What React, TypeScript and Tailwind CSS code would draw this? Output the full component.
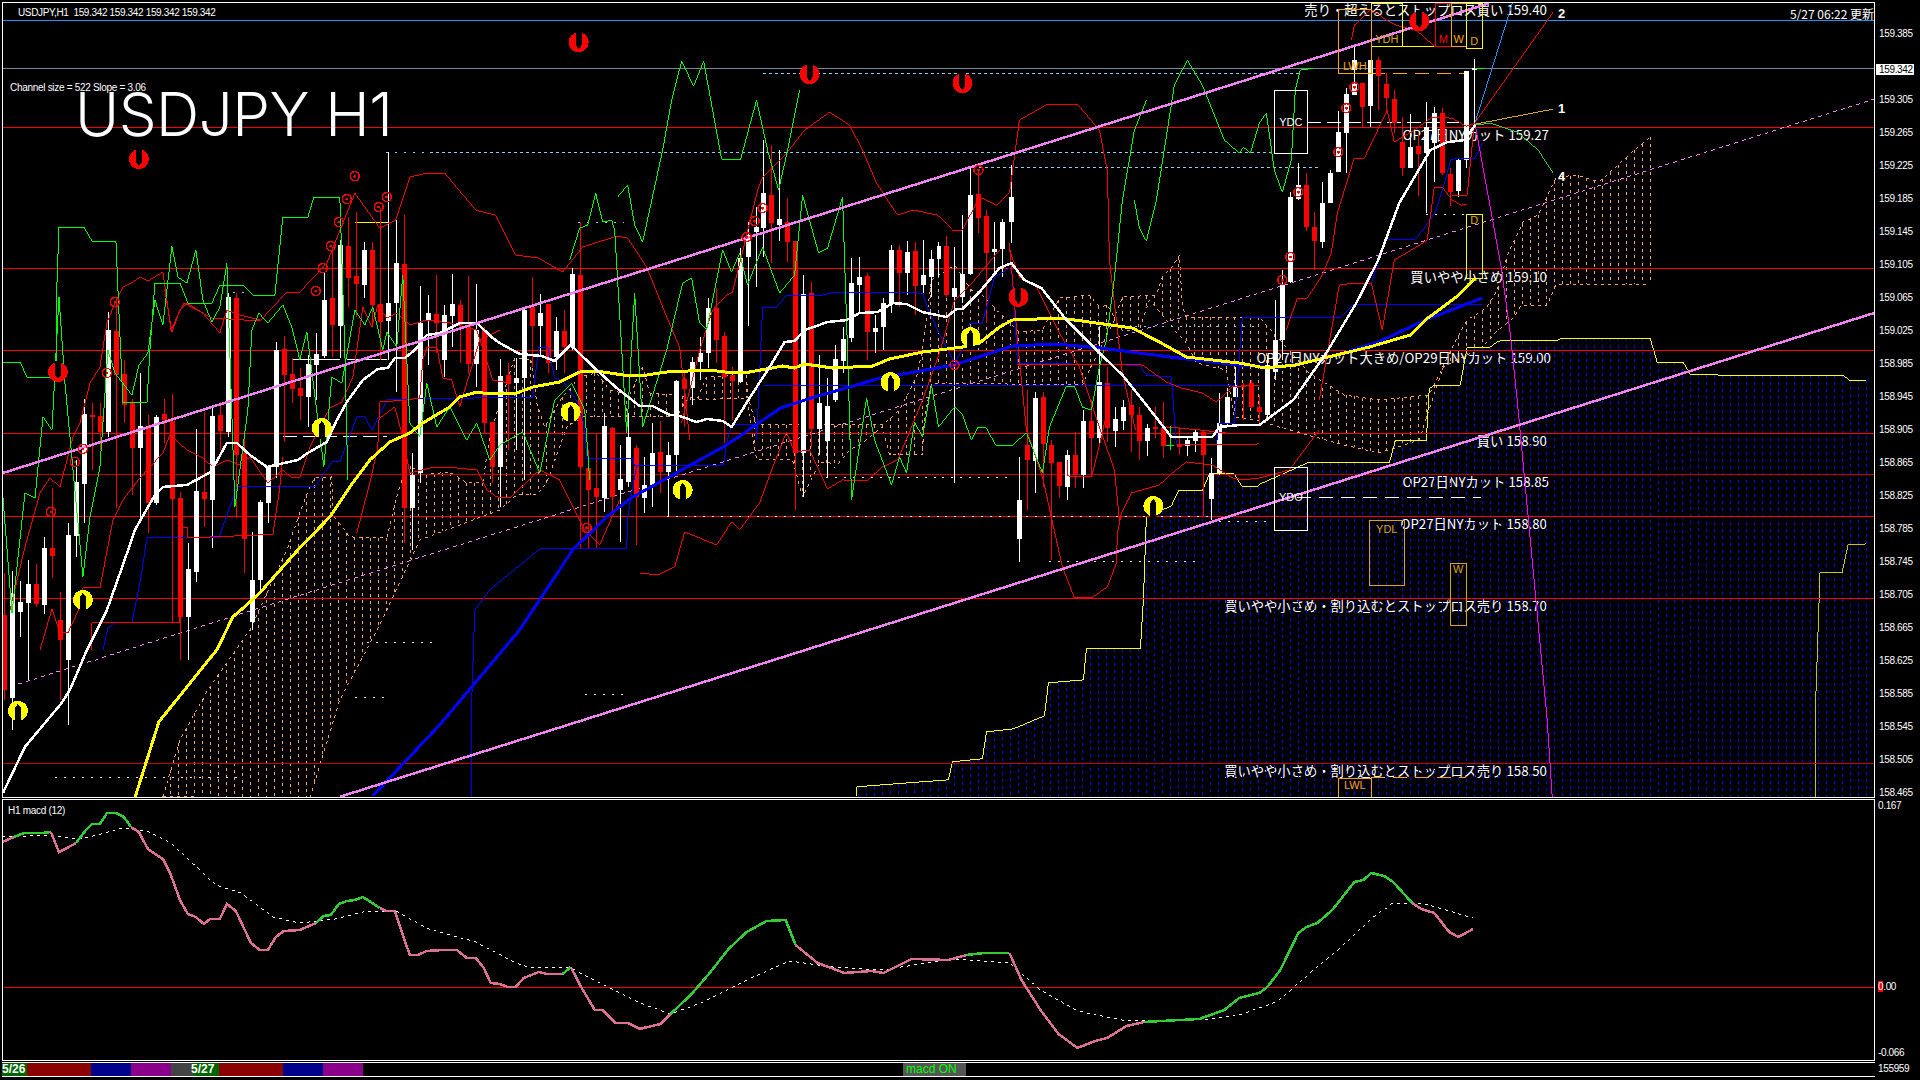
import React from 'react';

type Pt = [number, number];
type Candle = [number, 'w' | 'r', number, number, number, number];

// x, colour, high, body top, body bottom, low (page pixels)
const candles: Candle[] = [
  [4,'r',573,615,690,700],[12,'w',571,593,698,730],[20,'w',581,602,612,637],[28,'w',560,584,603,680],[36,'r',564,584,604,607],
  [44,'w',537,548,605,614],[52,'r',488,548,556,578],[60,'r',592,620,640,700],[68,'w',523,535,660,725],[76,'w',460,482,536,557],
  [84,'w',399,414,484,523],[92,'r',403,415,417,470],[100,'r',403,416,432,450],[108,'w',312,330,432,437],[116,'r',300,331,375,508],
  [124,'r',360,374,405,423],[132,'r',399,403,448,495],[140,'w',373,426,448,520],[148,'r',415,428,503,533],[156,'w',415,417,503,505],
  [164,'r',399,414,420,443],[172,'r',394,421,499,623],[180,'r',492,498,617,660],[188,'w',543,569,617,660],[196,'w',429,491,572,582],
  [204,'r',412,492,499,527],[212,'w',407,416,500,548],[220,'r',402,415,431,450],[228,'w',293,297,432,437],[236,'r',293,298,455,518],
  [244,'r',437,453,539,573],[252,'w',532,580,622,630],[260,'w',500,502,580,590],[268,'w',467,467,503,523],[276,'w',342,350,467,478],
  [284,'r',336,349,375,442],[292,'r',358,374,389,403],[300,'r',368,388,396,420],[308,'w',355,364,397,427],[316,'w',333,354,365,400],
  [324,'w',273,300,356,358],[332,'r',247,298,325,357],[340,'w',240,245,326,358],[348,'r',217,246,278,307],[356,'r',212,276,284,317],
  [364,'w',242,250,285,298],[372,'r',242,250,305,327],[380,'r',208,304,322,360],[388,'w',152,303,321,360],[396,'w',220,263,303,392],
  [404,'r',215,264,508,543],[412,'w',453,475,508,550],[420,'w',286,323,473,483],[428,'w',295,313,321,365],[436,'r',275,314,323,353],
  [444,'w',305,315,360,377],[452,'w',274,304,316,347],[460,'r',300,305,325,363],[468,'r',276,325,364,373],[476,'w',284,330,364,387],
  [484,'r',327,330,423,433],[492,'r',422,422,467,483],[500,'w',359,376,467,507],[508,'r',363,375,384,450],[516,'w',358,378,383,450],
  [524,'w',309,310,378,480],[532,'r',277,307,326,367],[540,'w',294,313,326,357],[548,'r',305,304,363,373],[556,'w',317,331,357,370],
  [564,'r',310,331,347,373],[572,'w',268,274,347,350],[580,'r',222,275,467,548],[588,'r',450,468,490,548],[596,'r',433,488,497,548],
  [604,'w',413,426,498,512],[612,'r',427,428,497,513],[620,'w',445,479,490,542],[628,'w',413,437,482,487],[636,'r',445,448,497,545],
  [644,'w',457,485,498,513],[652,'w',423,453,485,507],[660,'r',421,452,472,493],[668,'w',442,455,472,517],[676,'w',380,381,455,473],
  [684,'r',370,379,389,427],[692,'w',357,362,388,405],[700,'w',337,353,362,380],[708,'w',298,308,353,368],[716,'r',288,308,340,363],
  [724,'r',332,336,377,443],[732,'r',367,375,381,420],[740,'w',248,258,382,383],[748,'w',222,235,257,326],[756,'w',207,227,232,287],
  [763,'w',140,193,228,257],[771,'r',145,195,223,263],[779,'w',150,219,225,241],[787,'r',198,222,242,262],[795,'r',241,241,453,510],
  [803,'w',275,294,453,497],[811,'r',282,293,429,447],[819,'w',355,403,429,455],[827,'w',378,406,441,478],[835,'w',345,359,400,402],
  [843,'w',327,339,361,373],[851,'w',258,283,338,342],[859,'w',257,277,285,313],[867,'r',273,276,332,360],[875,'w',315,328,332,353],
  [883,'w',298,303,327,350],[891,'w',245,250,304,313],[899,'r',245,250,273,307],[907,'w',241,252,273,295],[915,'r',242,251,286,315],
  [923,'w',240,275,285,293],[931,'w',250,259,277,297],[939,'w',242,246,259,277],[947,'r',236,246,295,297],[955,'w',247,288,297,483],
  [963,'w',215,274,297,303],[971,'w',168,195,274,275],[979,'r',170,194,218,233],[987,'r',210,216,253,323],[995,'w',222,249,252,273],
  [1003,'w',219,222,249,277],[1012,'w',165,197,222,243],[1020,'w',457,500,539,562],[1028,'r',390,445,460,510],[1036,'w',392,398,461,493],
  [1044,'r',392,397,444,487],[1052,'r',440,445,463,560],[1060,'r',462,462,486,498],[1068,'w',450,455,487,500],[1076,'r',432,455,475,488],
  [1084,'w',410,421,475,488],[1092,'r',400,421,438,477],[1100,'w',327,382,438,443],[1108,'r',367,383,428,442],[1116,'w',407,419,431,447],
  [1124,'w',400,407,421,430],[1132,'r',390,405,415,452],[1140,'r',407,415,441,460],[1148,'w',424,428,441,456],[1156,'r',407,427,429,438],
  [1164,'r',402,428,446,458],[1180,'r',427,445,446,455],[1188,'w',437,440,446,456],[1196,'w',430,432,441,452],[1204,'r',430,432,455,517],
  [1212,'w',458,473,499,520],[1220,'w',393,423,473,475],[1228,'w',388,397,423,425],[1236,'w',367,385,397,397],[1244,'r',383,385,387,420],
  [1252,'r',380,383,407,408],[1260,'r',395,407,412,425],[1268,'w',355,365,415,420],[1276,'w',300,340,372,380],[1283,'w',270,285,340,360],
  [1291,'w',192,197,282,283],[1299,'w',163,185,199,200],[1307,'r',173,185,227,231],[1315,'r',212,227,241,270],[1323,'w',182,203,242,248],
  [1331,'w',170,173,203,203],[1339,'w',111,132,172,172],[1347,'w',88,94,133,173],[1355,'w',47,83,95,95],[1363,'r',83,83,107,127],
  [1371,'w',60,60,106,127],[1379,'r',57,60,76,110],[1387,'r',73,84,98,112],[1395,'r',90,99,123,133],[1403,'r',117,142,168,176],
  [1411,'w',114,147,168,168],[1419,'r',133,146,154,196],[1427,'w',102,127,153,213],[1435,'w',107,113,143,182],[1443,'r',108,113,173,175],
  [1451,'r',168,174,192,206],[1459,'w',158,160,191,197],[1467,'w',71,71,160,168],[1475,'w',59,68,70,125],
];

const whiteMa: Pt[] = [[3,793],[25,747],[61,704],[70,690],[87,650],[107,610],[123,565],[135,530],[155,495],[163,487],[187,485],[211,472],[227,443],[237,443],[250,455],[267,467],[298,460],[308,453],[327,442],[337,420],[347,402],[363,380],[378,369],[388,368],[395,358],[405,358],[415,350],[427,335],[440,333],[460,323],[477,323],[493,338],[500,343],[520,354],[542,356],[555,361],[571,345],[597,370],[617,388],[640,406],[653,406],[670,415],[677,415],[697,422],[707,419],[723,421],[732,427],[750,398],[770,367],[785,342],[795,341],[805,330],[828,322],[847,320],[860,313],[878,312],[893,303],[907,304],[923,312],[947,317],[957,309],[963,309],[980,292],[1000,268],[1012,263],[1025,280],[1042,288],[1067,320],[1100,353],[1123,375],[1147,405],[1172,437],[1213,437],[1220,427],[1240,425],[1260,425],[1294,400],[1327,353],[1357,303],[1379,260],[1400,203],[1431,150],[1448,142],[1465,140],[1476,125]];
const yellowMa: Pt[] = [[135,798],[159,722],[208,661],[217,650],[233,617],[247,605],[260,593],[298,550],[330,517],[350,487],[370,460],[390,442],[410,433],[423,423],[450,407],[460,397],[477,392],[483,393],[517,393],[533,387],[560,382],[580,372],[597,371],[630,376],[647,375],[667,372],[710,370],[733,373],[750,372],[783,366],[795,368],[805,364],[833,368],[873,366],[890,359],[923,352],[963,347],[980,343],[1000,327],[1013,320],[1060,318],[1090,322],[1133,328],[1160,342],[1187,357],[1240,363],[1266,368],[1296,365],[1370,347],[1411,335],[1426,320],[1457,297],[1476,278]];
const blueMa: Pt[] = [[373,796],[440,725],[520,630],[573,550],[607,517],[633,497],[673,475],[727,445],[781,408],[815,397],[881,378],[954,365],[1013,346],[1056,344],[1101,348],[1171,357],[1240,365],[1277,368],[1327,358],[1379,342],[1426,320],[1483,298]];

const thinBlue: Pt[][] = [
  [[103,650],[108,628],[115,623],[132,623],[140,583],[147,538],[219,538],[237,487],[315,487],[332,462],[340,462],[357,417],[365,417],[372,430],[387,400],[413,399],[533,397],[539,347],[548,347],[555,378],[563,380],[578,403],[585,427],[587,459],[633,459],[635,466],[724,465],[727,443],[732,425],[757,425],[757,440],[763,307],[777,307],[787,295],[823,295],[835,292],[923,293],[930,313],[943,340],[955,363],[963,350],[970,323],[983,323],[995,277],[1012,267],[1015,310],[1018,363],[1127,365],[1140,365],[1147,375],[1172,377],[1177,445],[1217,445],[1220,424],[1235,423],[1243,317],[1342,317],[1355,304],[1483,304]],
  [[472,798],[472,700],[475,610],[490,590],[540,549],[627,549],[628,517],[637,465]],
  [[763,385],[1236,385]],
  [[1372,283],[1387,239],[1416,239],[1426,227],[1437,210],[1448,173],[1452,159],[1476,158],[1483,143]],
];

const thinRed: Pt[][] = [
  [[10,610],[25,547],[40,493],[50,478],[60,487],[73,437],[80,423],[90,383],[100,367],[107,323],[115,303],[123,287],[133,282],[140,277],[148,281],[163,272],[167,300],[171,330],[184,303],[212,318],[245,320],[261,320],[286,293],[300,292],[327,263],[355,193],[380,228],[396,220],[410,177],[427,173],[445,173],[476,210],[496,215],[516,255],[539,258],[563,272],[583,247],[617,236],[628,238],[647,267],[667,317],[680,347],[686,400],[690,440]],
  [[682,423],[700,350],[713,310],[727,295],[733,292],[758,190],[763,177],[787,153],[805,130],[830,112],[850,125],[863,150],[877,183],[898,215],[913,210],[937,215],[953,230],[963,230],[980,197],[997,205],[1010,193],[1020,120],[1048,104],[1078,104],[1100,130],[1108,171],[1110,260],[1123,373],[1136,430]],
  [[40,650],[52,609],[60,633],[68,633],[80,607],[83,588],[100,588],[113,520],[123,500],[140,478],[163,453],[170,435],[187,450],[203,458],[213,467],[227,460],[240,465],[250,457],[268,483],[283,470],[292,478],[300,478],[310,447],[330,408],[342,402],[353,377],[363,307],[372,327],[378,305],[387,318],[397,313],[410,325],[427,320],[450,323],[477,330],[493,380],[510,383]],
  [[165,290],[172,332],[180,310],[187,303],[203,313],[220,333],[227,310],[240,315],[260,320]],
  [[92,650],[92,623],[180,623],[180,528],[188,528],[188,538],[260,535],[273,535],[280,487],[283,457]],
  [[357,533],[370,483],[378,447],[380,402],[407,400],[420,398],[423,360],[427,347],[437,347],[443,378],[452,380],[460,407],[467,383],[480,340],[500,330]],
  [[380,418],[395,407],[403,437],[410,473],[430,468],[457,468],[477,470],[487,490],[497,497],[510,498],[540,470],[560,480],[585,530],[600,545],[620,500]],
  [[640,573],[658,575],[675,567],[685,532],[717,545],[732,522],[740,530],[760,503],[772,470],[787,432],[795,452],[810,450],[828,489],[843,480],[867,481],[883,467],[898,460],[908,437],[923,400],[940,353],[955,300],[975,280],[1000,250]],
  [[1010,243],[1018,340],[1027,430],[1043,477],[1063,567],[1075,598],[1092,598],[1108,587],[1117,563],[1118,533],[1122,513],[1132,493],[1160,485],[1173,473],[1187,462],[1213,465],[1233,478],[1245,480],[1260,478],[1290,470],[1320,430]],
  [[1010,250],[1020,277],[1037,287],[1060,333],[1080,367],[1100,427],[1115,470],[1120,520]],
  [[1018,364],[1143,365],[1167,382],[1182,388],[1203,393],[1217,402],[1233,387],[1260,385]],
  [[1068,460],[1068,476],[1092,477],[1103,433],[1110,400]],
  [[1167,427],[1200,430],[1227,433]],[[1178,445],[1260,444]],
  [[1287,330],[1298,298],[1308,298],[1322,277],[1332,253],[1338,213],[1355,158],[1365,158],[1388,110],[1395,142],[1415,130],[1433,117],[1453,118],[1467,126],[1477,123]],
  [[1320,400],[1340,285],[1355,283],[1372,283],[1383,330],[1395,260],[1417,247],[1428,240],[1435,187],[1443,187],[1453,200],[1462,205],[1468,204]],
  [[1352,40],[1355,25],[1372,9],[1387,20],[1397,25],[1417,30],[1435,46],[1450,46]],
  [[1476,122],[1554,12]],
  [[1453,195],[1468,195],[1475,125]],
];

const thinGreen: Pt[][] = [
  [[3,362],[20,362],[27,377],[57,377],[57,283],[59,227],[84,227],[92,241],[116,241],[118,290],[123,403],[147,403],[150,350],[155,283],[180,283],[188,303],[212,303],[220,285],[243,285],[253,295],[275,295],[283,217],[308,217],[314,197],[340,197],[345,350],[348,480]],
  [[3,498],[12,613],[25,493],[35,498],[43,417],[52,430],[59,297],[65,383],[83,577],[90,517],[100,467],[108,350],[115,373],[132,395],[139,365],[148,353],[155,300],[163,325],[172,246],[178,277],[187,283],[196,250],[203,300],[212,322],[220,307],[227,263],[235,507],[248,410],[252,330],[259,313],[268,323],[283,305],[292,327],[300,360],[307,332],[324,467],[332,377],[342,383],[355,310],[365,325],[373,307],[383,350],[387,332],[397,347],[403,275],[410,423],[420,437],[427,383],[437,427],[450,407],[467,440],[477,423],[490,460],[500,445],[523,432],[540,473],[555,400],[572,383],[585,410],[590,480]],
  [[570,260],[580,228],[588,225],[596,193],[603,222],[612,220],[615,230],[627,433],[635,293],[643,427],[667,350],[683,283],[692,278],[700,323],[707,330],[723,250],[732,272],[740,253],[748,285],[763,247],[780,293],[795,275],[803,195],[819,253],[828,248],[843,197],[849,383],[852,500],[867,398],[875,440],[892,485],[900,457],[907,473],[915,422],[923,437],[932,385],[939,427],[955,407],[963,415],[972,440],[978,428],[987,428],[996,445],[1012,446],[1027,433],[1043,473],[1050,427],[1067,386],[1075,386],[1083,407],[1092,410],[1100,367],[1107,340],[1115,278],[1123,200],[1135,130],[1147,100]],
  [[618,197],[628,185],[635,225],[643,242],[663,150],[672,100],[682,61],[694,86],[704,61],[722,159],[741,159],[757,100],[768,150],[779,190],[788,150],[800,90]],
  [[1135,200],[1140,228],[1147,241],[1157,200],[1175,85],[1188,60],[1203,85],[1225,140],[1240,153],[1244,147],[1251,153],[1260,123],[1267,113],[1275,170],[1283,192],[1292,160],[1296,90],[1301,70],[1314,68]],
  [[1171,426],[1171,450]],[[1167,446],[1175,446]],[[1476,68],[1486,68]],
];

const yellowStep: Pt[] = [[857,796],[857,787],[949,780],[953,762],[983,759],[987,732],[1014,729],[1045,716],[1049,683],[1084,680],[1087,649],[1141,649],[1144,600],[1147,517],[1172,506],[1179,491],[1203,491],[1210,474],[1235,474],[1243,487],[1258,487],[1261,484],[1308,463],[1390,463],[1396,441],[1427,441],[1430,389],[1435,385],[1461,385],[1468,347],[1491,347],[1499,341],[1559,340],[1562,338],[1651,338],[1658,362],[1684,362],[1691,374],[1719,375],[1844,375],[1850,380],[1867,380]];

const cloudTop: Pt[] = [[163,797],[180,740],[208,690],[250,630],[287,550],[300,513],[310,487],[315,478],[332,477],[333,515],[350,537],[387,538],[397,497],[407,463],[423,475],[450,472],[467,483],[483,483],[490,437],[498,410],[515,358],[532,360],[537,403],[545,427],[562,398],[580,377],[597,373],[610,390],[630,395],[643,367],[650,393],[673,395],[698,398],[707,377],[747,375],[748,397],[757,425],[883,425],[900,410],[917,377],[923,350],[932,280],[955,265],[963,277],[972,290],[980,292],[997,310],[1020,332],[1043,330],[1060,298],[1090,295],[1100,307],[1108,305],[1115,317],[1123,297],[1157,295],[1163,277],[1172,268],[1180,255],[1183,307],[1187,317],[1260,317],[1310,373],[1345,395],[1380,400],[1430,395],[1455,343],[1468,320],[1487,308],[1498,290],[1509,253],[1524,222],[1539,215],[1557,177],[1578,175],[1600,182],[1613,170],[1632,153],[1651,137]];
const cloudBottom: Pt[] = [[163,797],[310,798],[340,700],[380,625],[420,540],[500,510],[517,495],[537,495],[547,483],[567,427],[583,417],[677,417],[687,400],[747,398],[757,460],[793,460],[803,497],[820,463],[830,463],[835,468],[850,450],[863,443],[883,427],[890,455],[923,455],[925,417],[932,383],[1083,385],[1090,370],[1115,320],[1123,330],[1140,330],[1150,300],[1187,343],[1197,363],[1227,370],[1235,417],[1257,420],[1290,430],[1345,445],[1380,453],[1420,440],[1444,367],[1483,347],[1496,333],[1515,317],[1522,305],[1548,305],[1557,284],[1651,284]];

const macdLines: { color: string; pts: Pt[] }[] = [
  { color: '#db7093', pts: [[2,842],[14,837]] },
  { color: '#32cd32', pts: [[14,837],[24,833],[41,833],[51,832]] },
  { color: '#db7093', pts: [[51,832],[59,852],[67,848],[76,843]] },
  { color: '#32cd32', pts: [[76,843],[86,830],[92,824],[100,824],[107,813],[116,813],[124,817],[131,827]] },
  { color: '#db7093', pts: [[131,827],[139,832],[148,849],[163,859],[171,875],[180,900],[188,914],[196,917],[204,924],[210,919],[220,919],[227,904],[236,911],[251,943],[260,950],[268,950],[276,937],[284,931],[300,930],[316,923]] },
  { color: '#32cd32', pts: [[316,923],[324,916],[331,915],[339,904],[347,901],[355,900],[363,897],[371,902],[380,908]] },
  { color: '#db7093', pts: [[380,908],[386,911],[395,911],[404,938],[410,955],[418,955],[427,951],[443,950],[457,950],[467,958],[476,958],[484,968],[491,983],[500,984],[508,987],[516,987],[524,978],[539,972],[547,974],[563,974]] },
  { color: '#32cd32', pts: [[563,974],[571,967]] },
  { color: '#db7093', pts: [[571,967],[582,988],[588,998],[595,1010],[603,1010],[616,1023],[628,1023],[640,1029],[661,1024],[671,1014]] },
  { color: '#32cd32', pts: [[671,1014],[692,994],[710,973],[729,949],[747,932],[767,921],[786,920],[796,945]] },
  { color: '#db7093', pts: [[796,945],[818,963],[845,973],[872,971],[884,973],[912,959],[949,960],[967,955]] },
  { color: '#32cd32', pts: [[967,955],[985,953],[1010,953]] },
  { color: '#db7093', pts: [[1010,953],[1022,980],[1041,1010],[1059,1034],[1078,1048],[1096,1041],[1108,1038],[1127,1026],[1145,1022]] },
  { color: '#32cd32', pts: [[1145,1022],[1200,1019],[1225,1010],[1240,998],[1260,993],[1268,987],[1281,970],[1299,933],[1307,927],[1318,923],[1333,910],[1355,882],[1364,880],[1372,873],[1385,876],[1394,882],[1403,892],[1413,903]] },
  { color: '#db7093', pts: [[1413,903],[1422,909],[1435,913],[1450,932],[1459,937],[1474,929]] },
];
const macdSignal: Pt[] = [[2,837],[51,835],[78,839],[98,835],[122,828],[147,831],[171,843],[200,870],[216,885],[241,893],[273,917],[300,923],[335,919],[367,911],[396,911],[429,929],[476,942],[516,963],[531,968],[571,968],[604,985],[640,1003],[671,1014],[704,1002],[747,980],[790,961],[833,967],[882,970],[955,959],[1010,963],[1041,990],[1078,1011],[1127,1021],[1212,1019],[1240,1015],[1277,1002],[1288,993],[1312,972],[1342,947],[1374,917],[1392,904],[1422,903],[1450,911],[1474,918]];

const circles: Pt[] = [[51,512],[75,462],[83,449],[107,373],[115,302],[316,291],[323,268],[331,246],[339,222],[347,199],[355,176],[379,207],[387,197],[587,528],[747,237],[755,221],[763,208],[955,365],[979,170],[1283,280],[1291,257],[1299,192],[1339,152],[1347,108],[1355,87]];
const downArrows: Pt[] = [[579,42],[139,159],[58,372],[810,74],[963,83],[1019,297],[1420,21]];
const upArrows: Pt[] = [[18,711],[83,600],[322,428],[571,412],[683,490],[891,382],[971,337],[1154,506]];

const segments: [string, string, string][] = [
  ['#87cefa', '2 7', 'M386 152H430M578 222H624M233 292H248M1100 326H1260'],
  ['#87cefa', '3 3', 'M430 152H1273M980 167H1322M763 73H1300'],
  ['#ffe4e1', '2 7', 'M826 478H1009M667 517H1210M1050 562H1203M1211 522H1268M367 643H435M585 695H627M55 778H239M355 698H386M1427 214H1467'],
  ['#ffffff', '14 6', 'M1308 122H1460M283 437H387'],
  ['#ffffff', '', 'M292 359H340M347 359H387'],
  ['#ffffff', '14 8', 'M1298 498H1482'],
  ['#ffa500', '14 8', 'M1372 73H1467M1372 778H1467'],
  ['#ffff00', '', 'M355 222H388M1372 46H1467'],
];

function toPoints(pts: Pt[]) {
  return pts.map(p => p.join(',')).join(' ');
}

function yAt(pts: Pt[], x: number) {
  for (let i = 1; i < pts.length; i++) {
    if (x <= pts[i][0]) {
      const [x0, y0] = pts[i - 1];
      const [x1, y1] = pts[i];
      return x1 === x0 ? y1 : y0 + ((y1 - y0) * (x - x0)) / (x1 - x0);
    }
  }
  return pts[pts.length - 1][1];
}

function hatch(fromX: number, toX: number, top: Pt[], bottom: (x: number) => number) {
  let d = '';
  for (let x = fromX; x <= toX; x += 8) {
    d += `M${x} ${Math.round(yAt(top, x))}V${Math.round(bottom(x))}`;
  }
  return d;
}

function Arrow({ x, y, up, color }: { x: number; y: number; up?: boolean; color: string }) {
  return (
    <g transform={`translate(${x} ${y}) scale(1 ${up ? -1 : 1})`}>
      <circle r="10" fill={color} />
      <path d="M-3 -11 L3 -11 L3 3 L0 7 L-3 3Z" fill="#000" />
    </g>
  );
}

function Box({ x, y, w, h, color, label, base, text }: { x: number; y: number; w: number; h: number; color: string; label: string; base: number; text?: string }) {
  return (
    <g>
      <rect x={x + 0.5} y={y + 0.5} width={w} height={h} fill="none" stroke={color} />
      <text x={x + w / 2} y={base} textAnchor="middle" fontSize="11" fill={text ?? color} fontFamily="Liberation Sans, sans-serif">
        {label}
      </text>
    </g>
  );
}

function MainChart() {
  return (
    <svg className="absolute inset-0 h-full w-full" viewBox="3 3 1872 794" shapeRendering="crispEdges">
      {/* ichimoku clouds */}
      <path d={hatch(859, 1867, yellowStep, () => 797)} stroke="#0000ff" strokeDasharray="3 4" fill="none" />
      <path d={hatch(163, 1651, cloudTop, x => yAt(cloudBottom, x))} stroke="#f4a460" strokeDasharray="3 4" fill="none" />
      <polyline points={toPoints(cloudTop)} stroke="#f4a460" strokeDasharray="3 4" fill="none" />
      <polyline points={toPoints(cloudBottom)} stroke="#f4a460" strokeDasharray="3 4" fill="none" />
      <polyline points={toPoints(yellowStep)} stroke="#ffff00" fill="none" />
      <polyline points="1816,797 1816,720 1821,573 1843,573 1849,545 1867,544" stroke="#c8c800" fill="none" />

      {/* level lines */}
      {[127, 268, 350, 433, 474, 516, 598, 763].map(y => (
        <path key={y} d={`M3 ${y + 0.5}H1875`} stroke={y === 474 || y === 763 ? '#c80000' : '#ff0000'} />
      ))}
      <path d="M3 20.5H1875" stroke="#1e90ff" />
      <path d="M3 68.5H1875" stroke="#778899" />
      {segments.map(([color, dash, d]) => (
        <path key={color + d} d={d} stroke={color} strokeDasharray={dash} fill="none" />
      ))}
      <line x1="3" y1="689" x2="1875" y2="99" stroke="#ee82ee" strokeDasharray="4 4" />

      {/* candles */}
      {candles.map(([x, c, hi, top, bot, lo]) => {
        const color = c === 'w' ? '#ffffff' : '#ff0000';
        return (
          <g key={x}>
            <path d={`M${x + 0.5} ${hi}V${lo}`} stroke={color} />
            <rect x={x - 2} y={top} width="5" height={Math.max(bot - top, 2)} fill={color} />
          </g>
        );
      })}
      <rect x="1353" y="60" width="5" height="10" fill="#fff" />

      {thinBlue.map((pts, i) => (
        <polyline key={i} points={toPoints(pts)} stroke="#0000ff" fill="none" />
      ))}
      {thinRed.map((pts, i) => (
        <polyline key={i} points={toPoints(pts)} stroke="#ff0000" fill="none" />
      ))}
      {thinGreen.map((pts, i) => (
        <polyline key={i} points={toPoints(pts)} stroke="#00ff00" fill="none" />
      ))}

      {/* forecast fan */}
      <polyline points="1476,122 1511,10 1513,3" stroke="#1e90ff" fill="none" />
      <polyline points="1476,124 1554,109" stroke="#daa520" fill="none" />
      <polyline points="1476,125 1491,123 1518,132 1539,150 1554,173" stroke="#32cd32" fill="none" />
      <polyline points="1476,125 1502,267 1511,333 1518,400 1548,720 1553,797" stroke="#ff00ff" fill="none" />

      <polyline points={toPoints(blueMa)} stroke="#0000ff" strokeWidth="3" fill="none" />
      <polyline points={toPoints(yellowMa)} stroke="#ffff00" strokeWidth="3" fill="none" />
      <polyline points={toPoints(whiteMa)} stroke="#ffffff" strokeWidth="2.5" fill="none" />

      {/* channel */}
      <line x1="3" y1="473" x2="1490" y2="3" stroke="#ee82ee" strokeWidth="2.5" />
      <line x1="340" y1="797" x2="1875" y2="313" stroke="#ee82ee" strokeWidth="2.5" />

      {circles.map(([x, y]) => (
        <g key={`${x}-${y}`}>
          <circle cx={x} cy={y} r="4.5" fill="none" stroke="#ff0000" strokeWidth="1.5" />
          <circle cx={x} cy={y} r="1.5" fill="#ff0000" />
        </g>
      ))}
      {downArrows.map(([x, y]) => (
        <Arrow key={x} x={x} y={y} color="#ff0000" />
      ))}
      {upArrows.map(([x, y]) => (
        <Arrow key={x} x={x} y={y} up color="#ffff00" />
      ))}

      <Box x={1275} y={90} w={33} h={63} color="#ffffff" label="YDC" base={126} />
      <Box x={1275} y={467} w={33} h={63} color="#ffffff" label="YDO" base={501} />
      <Box x={1372} y={3} w={31} h={43} color="#ffff00" label="YDH" base={43} text="#daa520" />
      <Box x={1370} y={520} w={35} h={65} color="#daa520" label="YDL" base={533} />
      <Box x={1339} y={9} w={33} h={64} color="#ffa500" label="LWH" base={70} />
      <Box x={1436} y={3} w={16} h={43} color="#ff0000" label="M" base={43} />
      <Box x={1452} y={3} w={15} h={43} color="#ffa500" label="W" base={43} />
      <Box x={1467} y={3} w={16} h={45} color="#ffff00" label="D" base={45} text="#daa520" />
      <Box x={1467} y={214} w={16} h={64} color="#ffff00" label="D" base={224} text="#daa520" />
      <Box x={1451} y={563} w={16} h={62} color="#daa520" label="W" base={573} />
      <Box x={1339} y={778} w={33} h={30} color="#ffa500" label="LWL" base={789} />
    </svg>
  );
}

function MacdChart() {
  return (
    <svg className="absolute inset-0 h-full w-full" viewBox="3 800 1872 260" shapeRendering="crispEdges">
      <path d="M4 987.5H1875" stroke="#ff0000" />
      <polyline points={toPoints(macdSignal)} stroke="#ffffff" strokeDasharray="3 4" fill="none" />
      {macdLines.map((l, i) => (
        <polyline key={i} points={toPoints(l.pts)} stroke={l.color} strokeWidth="2.5" fill="none" />
      ))}
    </svg>
  );
}

const prices = ['159.385', '159.342', '159.305', '159.265', '159.225', '159.185', '159.145', '159.105', '159.065', '159.025', '158.985', '158.945', '158.905', '158.865', '158.825', '158.785', '158.745', '158.705', '158.665', '158.625', '158.585', '158.545', '158.505', '158.465'];

const labelClass = "absolute whitespace-nowrap text-right font-['Noto_Sans_CJK_JP',sans-serif] text-[13.3px] leading-none text-white";

export default function App() {
  return (
    <div className="flex h-[1080px] w-[1920px] flex-col overflow-hidden bg-black pl-[2px] pt-[2px] font-['Liberation_Sans',sans-serif] text-[10px] text-white">
      {/* main window */}
      <div className="flex h-[796px] shrink-0">
        <div className="relative w-[1873px] overflow-hidden border border-white">
          <div className="absolute left-[15px] top-[4px] whitespace-pre leading-[11px] tracking-[-0.35px]">USDJPY,H1  159.342 159.342 159.342 159.342</div>
          <div className="absolute right-0 top-[4px] whitespace-nowrap font-['Noto_Sans_CJK_JP',sans-serif] text-[12px] leading-[13px]">5/27 06:22 更新</div>
          <div className="absolute left-[7px] top-[79px] leading-[11px] tracking-[-0.3px]">Channel size = 522 Slope = 3.06</div>
          <div className={`${labelClass} right-[327px] top-0`}>売り・超えるとストップロス買い 159.40</div>
          <div className={`${labelClass} right-[325px] top-[125px]`}>OP27日NYカット 159.27</div>
          <div className={`${labelClass} right-[327px] top-[267px]`}>買いやや小さめ 159.10</div>
          <div className={`${labelClass} right-[323px] top-[348px]`}>OP27日NYカット大きめ/OP29日NYカット 159.00</div>
          <div className={`${labelClass} right-[327px] top-[431px]`}>買い 158.90</div>
          <div className={`${labelClass} right-[325px] top-[472px]`}>OP27日NYカット 158.85</div>
          <div className={`${labelClass} right-[327px] top-[514px]`}>OP27日NYカット 158.80</div>
          <div className={`${labelClass} right-[327px] top-[596px]`}>買いやや小さめ・割り込むとストップロス売り 158.70</div>
          <div className={`${labelClass} right-[327px] top-[761px]`}>買いやや小さめ・割り込むとストップロス売り 158.50</div>
          <MainChart />
          <div className="absolute left-[72px] top-[90px] font-['Inter',sans-serif] text-[60px] font-light leading-[42px] tracking-[-0.5px] text-white">USDJPY H1</div>
          <div className="absolute left-[1555px] top-[4px] text-[13px] font-bold leading-[14px]">2</div>
          <div className="absolute left-[1555px] top-[99px] text-[13px] font-bold leading-[14px]">1</div>
          <div className="absolute left-[1555px] top-[167px] text-[13px] font-bold leading-[14px]">4</div>
        </div>
        <div className="flex flex-1 flex-col justify-between pl-[4px] pt-[26px] leading-[11px] tracking-[-0.35px]">
          {prices.map(p =>
            p === '159.342' ? (
              <span key={p} className="-ml-[3px] w-[38px] translate-y-[3px] bg-white pl-[3px] text-black">{p}</span>
            ) : (
              <span key={p}>{p}</span>
            )
          )}
        </div>
      </div>

      {/* macd window */}
      <div className="mt-[1px] flex h-[262px] shrink-0">
        <div className="relative w-[1873px] overflow-hidden border border-white">
          <MacdChart />
          <div className="absolute left-[5px] top-[5px] leading-[11px] tracking-[-0.3px]">H1  macd (12)</div>
        </div>
        <div className="flex flex-1 flex-col pl-[3px] leading-[11px] tracking-[-0.35px]">
          <span className="mt-[1px]">0.167</span>
          <span className="mt-[170px] w-[16px]"><span className="bg-[#ff0000]">0</span>.00</span>
          <span className="mt-[55px]">-0.066</span>
        </div>
      </div>

      {/* time strip */}
      <div className="mt-[1px] flex h-[15px] shrink-0">
        <div className="relative flex w-[1873px] overflow-hidden border-y border-white text-[12px] font-bold leading-[13px]">
          <div className="w-[25px] overflow-hidden bg-[#006400] text-right"><span className="mr-[4px]">5/26</span></div>
          <div className="w-[64px] bg-[#8b0000]" />
          <div className="w-[40px] bg-[#00008b]" />
          <div className="w-[40px] bg-[#8b008b]" />
          <div className="w-[22px] bg-[#444444]" />
          <div className="w-[26px] bg-[#006400]"><span className="-ml-[2px]">5/27</span></div>
          <div className="w-[64px] bg-[#8b0000]" />
          <div className="w-[40px] bg-[#00008b]" />
          <div className="w-[40px] bg-[#8b008b]" />
          <div className="absolute left-[901px] top-0 h-full w-[63px] bg-[#555555] pl-[3px] text-[12px] font-normal leading-[13px] text-[#00ff00]">macd ON</div>
        </div>
        <div className="pl-[3px] leading-[13px] tracking-[-0.35px]">155959</div>
      </div>
    </div>
  );
}
